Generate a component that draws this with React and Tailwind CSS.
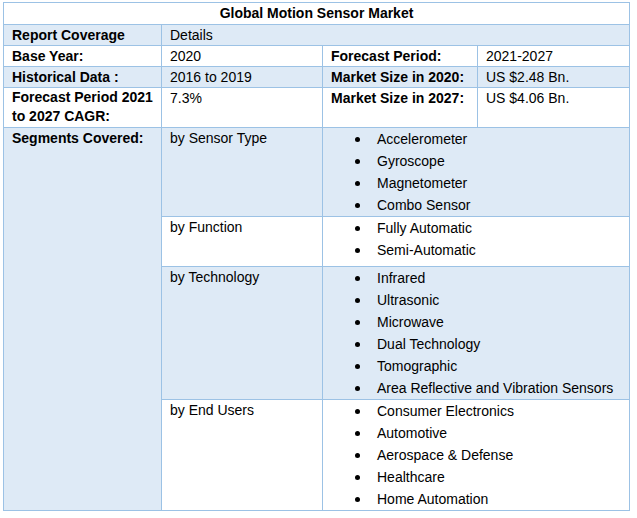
import React from 'react'

const blue = 'bg-[#deeaf6]'
const cell = 'border border-[#9cc2e5] align-top px-2 leading-[20px]'

const segments = [
  { label: 'by Sensor Type', items: ['Accelerometer', 'Gyroscope', 'Magnetometer', 'Combo Sensor'], h: 'h-[89px]', bg: blue },
  { label: 'by Function', items: ['Fully Automatic', 'Semi-Automatic'], h: 'h-[50px]', bg: 'bg-white' },
  { label: 'by Technology', items: ['Infrared', 'Ultrasonic', 'Microwave', 'Dual Technology', 'Tomographic', 'Area Reflective and Vibration Sensors'], h: 'h-[132px]', bg: blue },
  { label: 'by End Users', items: ['Consumer Electronics', 'Automotive', 'Aerospace & Defense', 'Healthcare', 'Home Automation'], h: 'h-[110px]', bg: 'bg-white' },
]

export default function App() {
  return (
    <div className="min-h-screen bg-white pt-[2px] pl-[3px] text-black text-[14px] font-['Liberation_Sans',Arial,sans-serif]">
      <table className="w-[626px] table-fixed border-collapse">
        <colgroup>
          <col className="w-[158px]" />
          <col className="w-[161px]" />
          <col className="w-[155px]" />
          <col className="w-[152px]" />
        </colgroup>
        <tbody>
          <tr className="h-[22px]">
            <td colSpan={4} className={`${cell} text-center font-bold`}>Global Motion Sensor Market</td>
          </tr>
          <tr className={`h-[21px] ${blue}`}>
            <td className={`${cell} font-bold`}>Report Coverage</td>
            <td colSpan={3} className={cell}>Details</td>
          </tr>
          <tr className="h-[20px]">
            <td className={`${cell} font-bold`}>Base Year:</td>
            <td className={cell}>2020</td>
            <td className={`${cell} font-bold`}>Forecast Period:</td>
            <td className={cell}>2021-2027</td>
          </tr>
          <tr className={`h-[20px] ${blue}`}>
            <td className={`${cell} font-bold`}>Historical Data :</td>
            <td className={cell}>2016 to 2019</td>
            <td className={`${cell} font-bold`}>Market Size in 2020:</td>
            <td className={cell}>US $2.48 Bn.</td>
          </tr>
          <tr className="h-[40px]">
            <td className={`${cell} font-bold !leading-[19px]`}>Forecast Period 2021 to 2027 CAGR:</td>
            <td className={cell}>7.3%</td>
            <td className={`${cell} font-bold`}>Market Size in 2027:</td>
            <td className={cell}>US $4.06 Bn.</td>
          </tr>
          {segments.map((s, i) => (
            <tr key={s.label} className={s.h}>
              {i === 0 && (
                <td rowSpan={4} className={`${cell} ${blue} font-bold`}>Segments Covered:</td>
              )}
              <td className={`${cell} ${s.bg}`}>{s.label}</td>
              <td colSpan={2} className={`${cell} ${s.bg} pl-0`}>
                <ul>
                  {s.items.map((it) => (
                    <li key={it} className="flex items-center h-[22px] whitespace-nowrap">
                      <span className="w-[37px] shrink-0 flex justify-end">
                        <span className="block w-[5px] h-[5px] rounded-full bg-black" />
                      </span>
                      <span className="pl-[17px]">{it}</span>
                    </li>
                  ))}
                </ul>
              </td>
            </tr>
          ))}
        </tbody>
      </table>
    </div>
  )
}
